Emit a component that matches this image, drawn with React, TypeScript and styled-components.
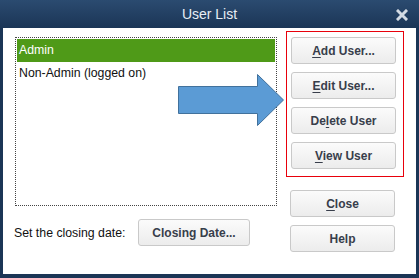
import styled, {createGlobalStyle} from "styled-components";

const GlobalStyle = createGlobalStyle`
    html, body {
        margin: 0;
        padding: 0;
        background: #1b3556;
    }
    body {
        font-family: "Liberation Sans", Arial, sans-serif;
    }
`

const Window = styled.div`
    width: 419px;
    height: 278px;
    box-sizing: border-box;
    display: flex;
    flex-direction: column;
    background: linear-gradient(#2b4b70, #1b3556 28px);
    padding: 0 3px 4px 3px;
`

const TitleBar = styled.div`
    height: 28px;
    flex: none;
    position: relative;
    display: flex;
    align-items: center;
    justify-content: center;
    color: #e8eef5;
    font-size: 14px;
`

const CloseX = styled.svg`
    position: absolute;
    right: 8px;
    top: 9px;
`

const Body = styled.div`
    flex: 1;
    position: relative;
    background: #ffffff;
    display: flex;
    padding: 0 12px;
`

const LeftCol = styled.div`
    width: 263px;
    padding-top: 9px;
    display: flex;
    flex-direction: column;
`

const ListBox = styled.div`
    height: 169px;
    box-sizing: border-box;
    border: 1px dotted #444;
    padding: 1px;
    font-size: 12.3px;
`

const ListItem = styled.div<{ $selected?: boolean }>`
    height: 23px;
    line-height: 23px;
    padding-left: 2px;
    color: ${p => p.$selected ? "#ffffff" : "#111111"};
    background: ${p => p.$selected ? "#4f9a18" : "transparent"};
`

const DateRow = styled.div`
    margin-top: 13px;
    display: flex;
    align-items: center;
    font-size: 12.3px;
    color: #111;
    margin-left: -1px;
`

const Label = styled.span`
    width: 124px;
`

const RightCol = styled.div`
    margin-left: 9px;
    padding-top: 3px;
    display: flex;
    flex-direction: column;
`

const RedBox = styled.div`
    width: 118px;
    height: 146px;
    box-sizing: border-box;
    border: 1px solid #e8000b;
    padding: 5px 0 0 4px;
    display: flex;
    flex-direction: column;
    gap: 8px;
`

const SideButtons = styled.div`
    margin-top: 13px;
    padding-left: 4px;
    display: flex;
    flex-direction: column;
    gap: 8px;
`

const Button = styled.button<{ $width?: number }>`
    width: ${p => p.$width ?? 105}px;
    height: 27px;
    box-sizing: border-box;
    border: 1px solid #c9c9c9;
    border-radius: 3px;
    background: linear-gradient(#fbfbfb, #ececec);
    font-family: "Liberation Sans", Arial, sans-serif;
    font-weight: bold;
    font-size: 12px;
    color: #383e4b;
    padding: 0;
    u {
        text-decoration-thickness: 1px;
        text-underline-offset: 2px;
    }
`

const Arrow = styled.svg`
    position: absolute;
    left: 174px;
    top: 45px;
`

export default function App() {
    return (
        <>
            <GlobalStyle/>
            <Window>
                <TitleBar>
                    User List
                    <CloseX width="12" height="12" viewBox="0 0 12 12">
                        <path d="M2 2 L10 10 M10 2 L2 10" stroke="#d3dbe4" strokeWidth="3" strokeLinecap="square"/>
                    </CloseX>
                </TitleBar>
                <Body>
                    <LeftCol>
                        <ListBox>
                            <ListItem $selected>Admin</ListItem>
                            <ListItem>Non-Admin (logged on)</ListItem>
                        </ListBox>
                        <DateRow>
                            <Label>Set the closing date:</Label>
                            <Button $width={112}>Closing Date...</Button>
                        </DateRow>
                    </LeftCol>
                    <RightCol>
                        <RedBox>
                            <Button><u>A</u>dd User...</Button>
                            <Button><u>E</u>dit User...</Button>
                            <Button>De<u>l</u>ete User</Button>
                            <Button><u>V</u>iew User</Button>
                        </RedBox>
                        <SideButtons>
                            <Button><u>C</u>lose</Button>
                            <Button>Help</Button>
                        </SideButtons>
                    </RightCol>
                    <Arrow width="110" height="54" viewBox="0 0 110 54">
                        <path d="M1.5 13.5 H80.5 V1.5 L106.5 27 L80.5 52.5 V40.5 H1.5 Z"
                              fill="#5b9bd5" stroke="#41719c" strokeWidth="1"/>
                    </Arrow>
                </Body>
            </Window>
        </>
    )
}
